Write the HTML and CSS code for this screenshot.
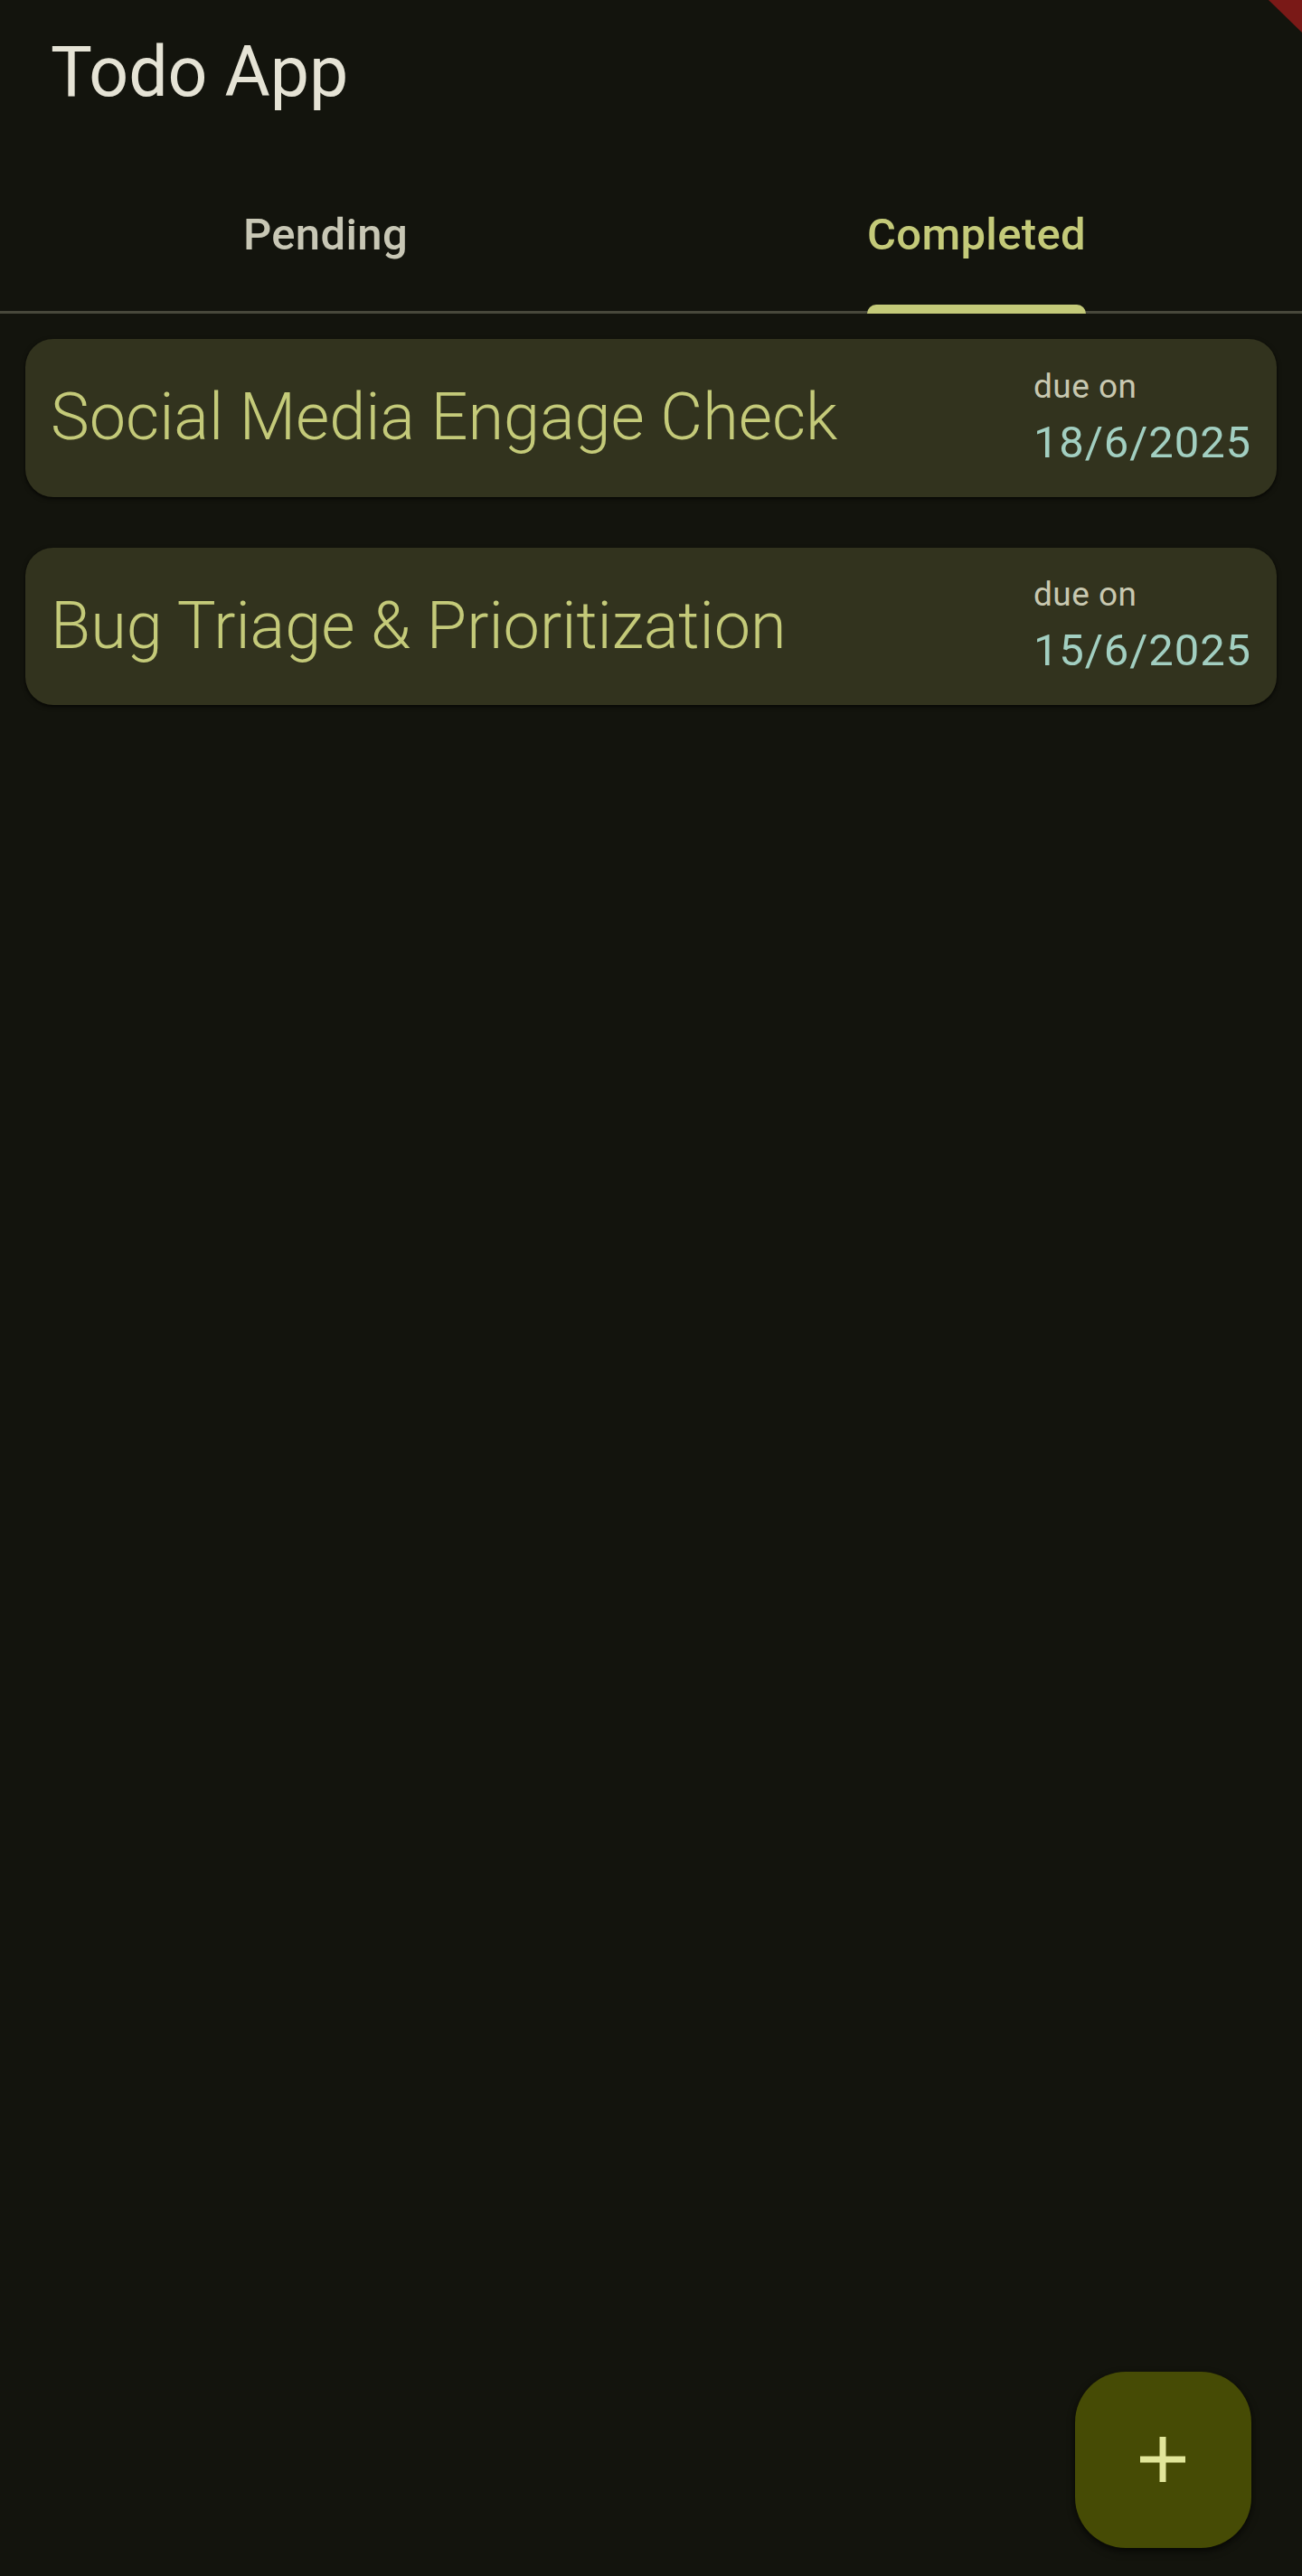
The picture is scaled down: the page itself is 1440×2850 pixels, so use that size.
FILE: index.html
```html
<!DOCTYPE html>
<html lang="en">
<head>
<meta charset="utf-8">
<title>Todo App</title>
<link rel="stylesheet" href="styles.css">
</head>
<body>
<div class="app">
  <header class="appbar">
    <h1 class="title">Todo App</h1>
  </header>
  <nav class="tabs">
    <div class="tab"><span class="label">Pending</span></div>
    <div class="tab active"><span class="label">Completed</span></div>
  </nav>
  <main class="list">
    <article class="card">
      <div class="card-title">Social Media Engage Check</div>
      <div class="due">
        <div class="due-label">due on</div>
        <div class="due-date">18/6/2025</div>
      </div>
    </article>
    <article class="card">
      <div class="card-title">Bug Triage &amp; Prioritization</div>
      <div class="due">
        <div class="due-label">due on</div>
        <div class="due-date">15/6/2025</div>
      </div>
    </article>
  </main>
  <button class="fab" aria-label="Add todo">
    <svg class="fab-icon" width="50" height="50" viewBox="0 0 50 50">
      <rect x="21.5" y="0" width="7" height="50" fill="#e1e69a"/>
      <rect x="0" y="21.5" width="50" height="7" fill="#e1e69a"/>
    </svg>
  </button>
  <div class="debug-corner"></div>
</div>
</body>
</html>
```

FILE: styles.css
```css
* {
  box-sizing: border-box;
}

html, body {
  margin: 0;
  padding: 0;
}

body {
  background: #13140d;
  font-family: Roboto, "Noto Sans", "Liberation Sans", sans-serif;
  width: 1440px;
  height: 2850px;
  overflow: hidden;
}

.app {
  position: relative;
  width: 1440px;
  height: 2850px;
  background: #13140d;
}

.appbar {
  height: 186px;
  padding: 31px 0 0 56px;
}

.title {
  margin: 0;
  font-size: 77px;
  line-height: 98px;
  font-weight: 400;
  color: #e5e3d5;
}

.tabs {
  display: flex;
  height: 161px;
  border-bottom: 3px solid #48483b;
}

.tab {
  flex: 1;
  display: flex;
  justify-content: center;
  padding-top: 39px;
}

.label {
  position: relative;
  display: inline-block;
  height: 70px;
  font-size: 49px;
  line-height: 70px;
  font-weight: 500;
  letter-spacing: 0.35px;
  color: #c8c7b5;
}

.tab.active .label {
  color: #c4ca79;
}

.tab.active .label::after {
  content: "";
  position: absolute;
  left: 0;
  right: 0;
  bottom: -52px;
  height: 10.5px;
  background: #c4ca79;
  border-radius: 10px 10px 0 0;
}

.list {
  display: flex;
  flex-direction: column;
  gap: 56px;
  padding: 28px 28px 0 28px;
}

.card {
  height: 174.5px;
  display: flex;
  align-items: center;
  justify-content: space-between;
  padding: 0 28px;
  background: #32331e;
  border-radius: 31px;
  box-shadow: 0 2px 5px rgba(0, 0, 0, 0.55), 0 1px 2px rgba(0, 0, 0, 0.4);
}

.card-title {
  font-size: 72px;
  font-weight: 300;
  line-height: 90px;
  color: #c4ca79;
  white-space: nowrap;
}

.due {
  display: flex;
  flex-direction: column;
}

.due-label {
  font-size: 37px;
  line-height: 55px;
  font-weight: 400;
  letter-spacing: 0.5px;
  color: #c8c8b0;
}

.due-date {
  font-size: 49px;
  line-height: 70px;
  font-weight: 400;
  letter-spacing: 0.875px;
  color: #a2cfc1;
}

.fab {
  position: absolute;
  right: 56.5px;
  bottom: 31.5px;
  width: 195px;
  height: 195px;
  border: none;
  border-radius: 56px;
  background: #464b05;
  display: flex;
  align-items: center;
  justify-content: center;
  padding: 0;
  box-shadow: 0 4px 10px rgba(0, 0, 0, 0.45), 0 2px 4px rgba(0, 0, 0, 0.35);
}

.fab-icon {
  display: block;
}

.debug-corner {
  position: absolute;
  top: 0;
  right: 0;
  width: 37px;
  height: 36px;
  background: #7a1917;
  clip-path: polygon(0 0, 100% 0, 100% 100%);
}
```
